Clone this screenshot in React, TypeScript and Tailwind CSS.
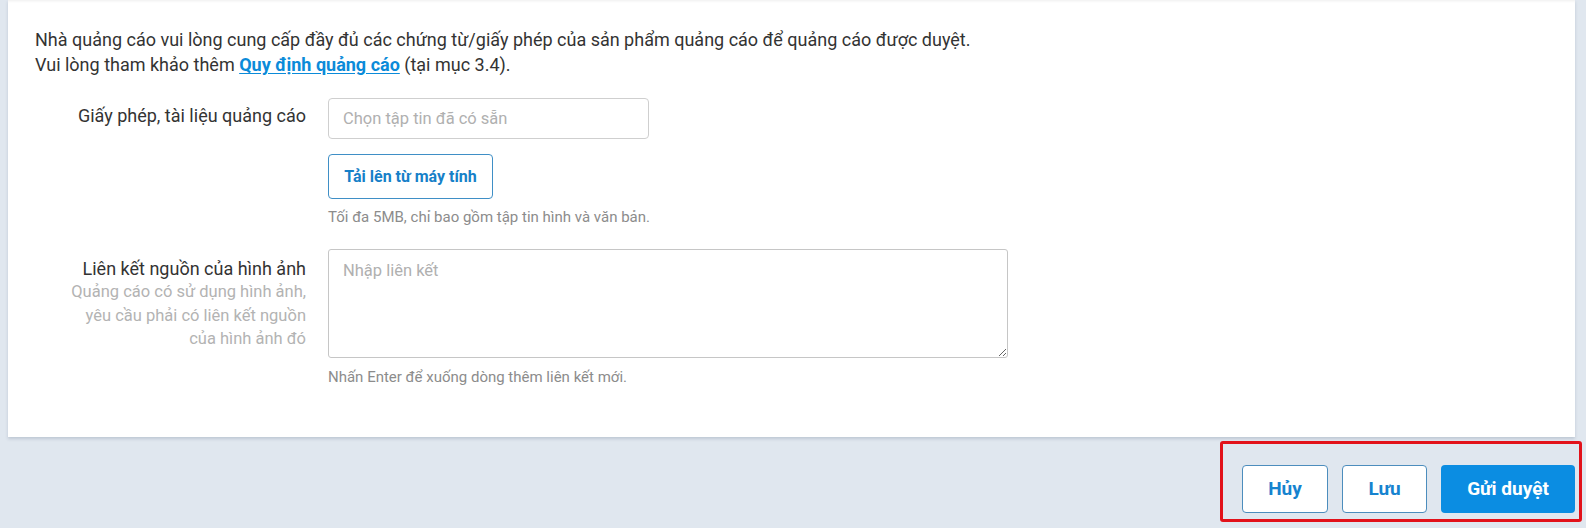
import React from "react";

function FieldLabel({
  title,
  hint,
  className = "",
}: {
  title: string;
  hint?: string[];
  className?: string;
}) {
  return (
    <div className={`w-[271px] shrink-0 text-right ${className}`}>
      <p className="text-[18px] leading-[23px] text-[#333]">{title}</p>
      {hint &&
        hint.map((line) => (
          <p key={line} className="text-[16.5px] leading-[23.5px] text-[#b3b3b3]">
            {line}
          </p>
        ))}
    </div>
  );
}

export default function App() {
  return (
    <div className="min-h-[528px] bg-[#e0e7ef] font-['Roboto',sans-serif]">
      <div className="pl-2 pr-[11px]">
        <div className="h-[437px] bg-white pl-[27px] pt-[27px] shadow-[0_2px_3px_rgba(40,60,90,0.18),inset_0_3px_3px_-2px_rgba(0,0,0,0.07)]">
          <div className="text-[18px] leading-[25px] text-[#333]">
            <p>
              Nhà quảng cáo vui lòng cung cấp đầy đủ các chứng từ/giấy phép của sản phẩm quảng cáo để
              quảng cáo được duyệt.
            </p>
            <p>
              Vui lòng tham khảo thêm{" "}
              <a href="#" className="font-bold text-[#0b8bd9] underline underline-offset-2">
                Quy định quảng cáo
              </a>{" "}
              (tại mục 3.4).
            </p>
          </div>

          <div className="mt-[21px] flex gap-[22px]">
            <FieldLabel title="Giấy phép, tài liệu quảng cáo" className="pt-[6px]" />
            <div className="flex flex-col items-start">
              <input
                readOnly
                placeholder="Chọn tập tin đã có sẵn"
                className="h-[41px] w-[321px] rounded-[4px] border border-[#cfcfcf] px-[14px] text-[16.5px] text-[#333] outline-none placeholder:text-[#b0b0b0]"
              />
              <button className="mt-[15px] h-[45px] w-[165px] rounded-[4px] border border-[#3f8fc6] bg-white text-[16px] font-bold text-[#1680c8]">
                Tải lên từ máy tính
              </button>
              <p className="mt-[9px] text-[15px] leading-[18px] text-[#8c8c8c]">
                Tối đa 5MB, chỉ bao gồm tập tin hình và văn bản.
              </p>
            </div>
          </div>

          <div className="mt-[23px] flex gap-[22px]">
            <FieldLabel
              title="Liên kết nguồn của hình ảnh"
              hint={["Quảng cáo có sử dụng hình ảnh,", "yêu cầu phải có liên kết nguồn", "của hình ảnh đó"]}
              className="pt-[8px]"
            />
            <div className="flex flex-col items-start">
              <textarea
                placeholder="Nhập liên kết"
                className="h-[109px] w-[680px] rounded-[3px] border border-[#c6c6c6] px-[14px] pt-[10px] text-[16.5px] leading-[22px] text-[#333] outline-none placeholder:text-[#b0b0b0]"
              />
              <p className="mt-[10px] text-[15px] leading-[18px] text-[#8c8c8c]">
                Nhấn Enter để xuống dòng thêm liên kết mới.
              </p>
            </div>
          </div>
        </div>
      </div>

      <div className="mt-[4px] flex justify-end pr-[4px]">
        <div className="flex gap-[14px] rounded-[3px] border-[3px] border-[#e2121a] pb-[6px] pl-[19px] pr-[4px] pt-[21px]">
          <button className="h-[48px] w-[86px] rounded-[4px] border border-[#4c8dbd] bg-white text-[19px] font-bold text-[#1683cf]">
            Hủy
          </button>
          <button className="h-[48px] w-[85px] rounded-[4px] border border-[#4c8dbd] bg-white text-[19px] font-bold text-[#1683cf]">
            Lưu
          </button>
          <button className="h-[48px] w-[134px] rounded-[4px] bg-[#0b8de2] text-[19px] font-bold text-white">
            Gửi duyệt
          </button>
        </div>
      </div>
    </div>
  );
}
